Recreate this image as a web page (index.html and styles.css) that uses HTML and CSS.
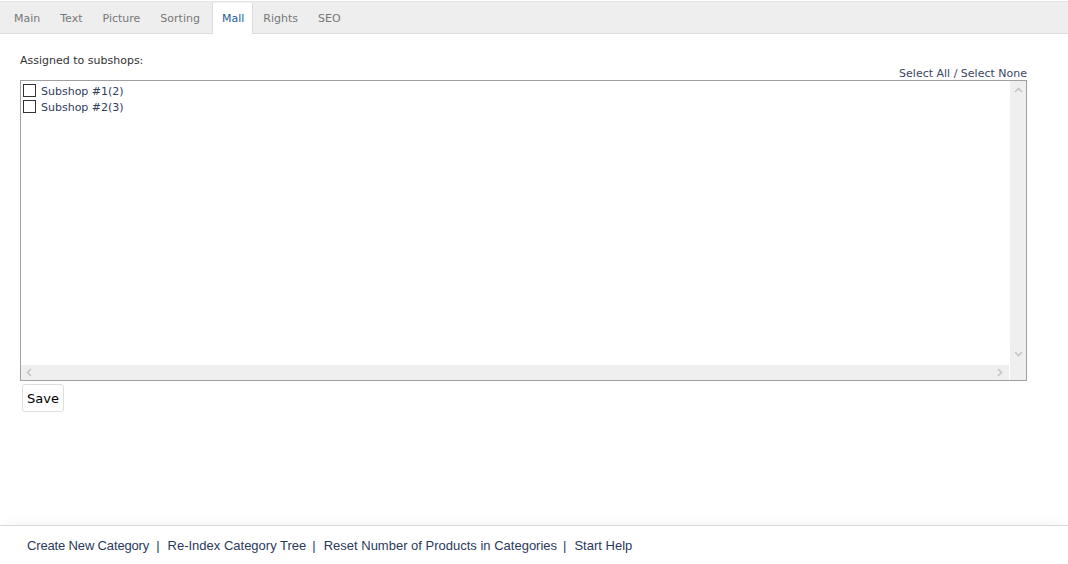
FILE: index.html
```html
<!DOCTYPE html>
<html>
<head>
<meta charset="utf-8">
<link rel="stylesheet" href="styles.css">
</head>
<body>
<div class="page">
  <div class="tabs">
    <span class="tab">Main</span>
    <span class="tab">Text</span>
    <span class="tab">Picture</span>
    <span class="tab">Sorting</span>
    <span class="tab active">Mall</span>
    <span class="tab">Rights</span>
    <span class="tab">SEO</span>
  </div>
  <div class="content">
    <div class="label">Assigned to subshops:</div>
    <div class="select-links">Select All / Select None</div>
    <div class="listbox">
      <div class="list-main">
        <div class="items">
          <label class="item"><span class="cb"></span>Subshop #1(2)</label>
          <label class="item"><span class="cb"></span>Subshop #2(3)</label>
        </div>
        <div class="hscroll">
          <svg width="6" height="9" viewBox="0 0 6 9"><path d="M5 1 L1.5 4.5 L5 8" fill="none" stroke="#c6c6c6" stroke-width="1.7"/></svg>
          <svg width="6" height="9" viewBox="0 0 6 9"><path d="M1 1 L4.5 4.5 L1 8" fill="none" stroke="#c6c6c6" stroke-width="1.7"/></svg>
        </div>
      </div>
      <div class="vscroll">
        <svg width="9" height="6" viewBox="0 0 9 6"><path d="M1 5 L4.5 1.5 L8 5" fill="none" stroke="#c6c6c6" stroke-width="1.7"/></svg>
        <svg width="9" height="6" viewBox="0 0 9 6"><path d="M1 1 L4.5 4.5 L8 1" fill="none" stroke="#c6c6c6" stroke-width="1.7"/></svg>
      </div>
    </div>
    <button class="save">Save</button>
  </div>
  <div class="footer">
    <a class="first">Create New Category</a><span class="sep first-sep">|</span>
    <a>Re-Index Category Tree</a><span class="sep">|</span>
    <a>Reset Number of Products in Categories</a><span class="sep">|</span>
    <a>Start Help</a>
  </div>
</div>
</body>
</html>
```
FILE: styles.css
```css
html, body {
  margin: 0;
  padding: 0;
  background: #fff;
}
body {
  font-family: "DejaVu Sans", Verdana, sans-serif;
  font-size: 11px;
  color: #333;
}
.page {
  width: 1068px;
  height: 564px;
  display: flex;
  flex-direction: column;
}
.tabs {
  margin-top: 1px;
  height: 31px;
  background: #eeeeee;
  border-top: 1px solid #e4e4e4;
  border-bottom: 1px solid #dcdcdc;
  display: flex;
  align-items: stretch;
  padding-left: 4px;
}
.tab {
  padding: 0 10px;
  display: flex;
  align-items: center;
  color: #777;
  font-size: 11px;
  margin-top: 1px;
}
.tab.active {
  background: #fff;
  color: #1d5d9b;
  border-left: 1px solid #dcdcdc;
  border-right: 1px solid #dcdcdc;
  margin-bottom: -1px;
  margin-left: 2px;
  padding: 0 8px 0 9px;
}
.content {
  padding: 20px 41px 0 20px;
  flex: 1;
}
.label {
  height: 13px;
  line-height: 13px;
}
.select-links {
  text-align: right;
  color: #3b4766;
  height: 13px;
  line-height: 13px;
}
.listbox {
  height: 299px;
  border: 1px solid #a0a0a0;
  display: flex;
}
.list-main {
  flex: 1;
  display: flex;
  flex-direction: column;
  margin-right: 1px;
}
.items {
  flex: 1;
  padding: 2px 0 0 2px;
}
.item {
  display: flex;
  align-items: center;
  height: 16px;
  color: #2f3d60;
}
.cb {
  width: 11px;
  height: 11px;
  border: 1px solid #333;
  margin-right: 5px;
  margin-top: -2px;
}
.vscroll {
  width: 16px;
  background: #efefef;
  display: flex;
  flex-direction: column;
  justify-content: space-between;
  align-items: center;
  padding: 6px 0 23px;
}
.hscroll {
  height: 15px;
  background: #efefef;
  display: flex;
  justify-content: space-between;
  align-items: center;
  padding: 0 6px 0 5px;
}
.save {
  margin: 3px 0 0 2px;
  height: 28px;
  padding: 0 4px;
  background: #fff;
  border: 1px solid #dedede;
  border-radius: 3px;
  font-family: "DejaVu Sans", Verdana, sans-serif;
  font-size: 13px;
  color: #000;
}
.footer {
  height: 38px;
  border-top: 1px solid #d8d8d8;
  box-shadow: 0 -10px 12px -6px rgba(0,0,0,0.035);
  padding: 0 0 0 27px;
  display: flex;
  align-items: center;
  font-family: "Liberation Sans", Arial, sans-serif;
  font-size: 13px;
  color: #2b3a5b;
}
.footer a {
  color: #2b3a5b;
}
.footer a.first {
  letter-spacing: -0.15px;
}
.sep {
  margin: 0 8px 0 6px;
}
.sep.first-sep {
  margin: 0 8px 0 7px;
}
```
